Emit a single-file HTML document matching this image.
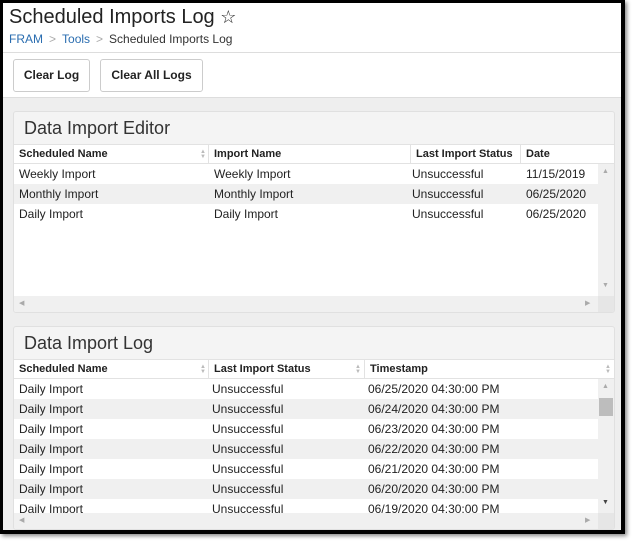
<!DOCTYPE html>
<html><head><style>
*{margin:0;padding:0;box-sizing:border-box}
body{width:633px;height:541px;background:#fff;position:relative;overflow:hidden;font-family:"Liberation Sans",Arial,sans-serif;color:#222}
.frame{position:absolute;left:0;top:0;width:625px;height:534px;border:3px solid #000;border-right-width:4px;border-bottom-width:4px;background:#eeeeee;overflow:hidden;box-shadow:2px 2px 4px #888}
.head{position:absolute;left:0;top:0;right:0;height:50px;background:#fff;border-bottom:1px solid #ddd}
.bar{position:absolute;left:0;top:50px;right:0;height:45px;background:#fff;border-bottom:1px solid #ddd}
.title{position:absolute;left:6px;top:3px;font-size:20px;color:#222}
.crumb{position:absolute;left:6px;top:29px;font-size:12px;color:#333}
.crumb a{color:#2a6db0;text-decoration:none}
.crumb .s{color:#aaa;margin:0 6px}
.btn{position:absolute;top:6px;height:33px;border:1px solid #ccc;border-radius:3px;background:#fff;font-size:12px;font-weight:bold;color:#222;line-height:31px;text-align:center}
.panel{position:absolute;left:10px;width:602px;background:#f4f4f4;border:1px solid #e0e0e0;border-radius:3px;overflow:hidden}
.ptitle{position:absolute;left:10px;top:6px;font-size:18px;color:#333}
.hdr{position:absolute;left:0;right:0;top:32px;height:20px;background:#fff;border-top:1px solid #e2e2e2;border-bottom:1px solid #e2e2e2}
.hdr div{position:absolute;top:0;height:19px;font-size:11px;font-weight:bold;line-height:19px;padding-left:5px;border-right:1px solid #e2e2e2}
.body{position:absolute;left:0;right:16px;top:52px;background:#fff;overflow:hidden}
.row{position:relative;height:20px;font-size:12px;line-height:20px}
.row:nth-child(even){background:#f0f0f0}
.row span{position:absolute;top:0}
.vs{position:absolute;right:0;width:16px;top:52px;background:#f0f0f0}
.hs{position:absolute;left:0;right:16px;height:16px;background:#f0f0f0}
.arr{position:absolute;font-size:7px;color:#aaa}
.sa{position:absolute;font-size:6px;color:#bbb;line-height:5px}
</style></head><body>
<div class="frame">
 <div class="head">
  <div class="title">Scheduled Imports Log <span style="font-size:18px">☆</span></div>
  <div class="crumb"><a>FRAM</a><span class="s">&gt;</span><a>Tools</a><span class="s">&gt;</span>Scheduled Imports Log</div>
 </div>
 <div class="bar">
  <div class="btn" style="left:10px;width:77px">Clear Log</div>
  <div class="btn" style="left:97px;width:103px">Clear All Logs</div>
 </div>

 <div class="panel" style="top:108px;height:202px">
  <div class="ptitle">Data Import Editor</div>
  <div class="hdr">
   <div style="left:0;width:195px">Scheduled Name<span class="sa" style="left:186px;top:5px">▲<br>▼</span></div>
   <div style="left:195px;width:202px">Import Name</div>
   <div style="left:397px;width:110px">Last Import Status</div>
   <div style="left:507px;width:95px;border:0">Date</div>
  </div>
  <div class="body" style="height:132px">
   <div class="row"><span style="left:5px">Weekly Import</span><span style="left:200px">Weekly Import</span><span style="left:398px">Unsuccessful</span><span style="left:512px">11/15/2019</span></div>
   <div class="row"><span style="left:5px">Monthly Import</span><span style="left:200px">Monthly Import</span><span style="left:398px">Unsuccessful</span><span style="left:512px">06/25/2020</span></div>
   <div class="row"><span style="left:5px">Daily Import</span><span style="left:200px">Daily Import</span><span style="left:398px">Unsuccessful</span><span style="left:512px">06/25/2020</span></div>
  </div>
  <div class="vs" style="height:132px"><span class="arr" style="left:4px;top:4px">▲</span><span class="arr" style="left:4px;top:118px">▼</span></div>
  <div class="hs" style="top:184px"><span class="arr" style="left:5px;top:3px">◀</span><span class="arr" style="left:571px;top:3px">▶</span></div>
  <div style="position:absolute;right:0;top:184px;width:16px;height:16px;background:#e6e6e6"></div>
 </div>

 <div class="panel" style="top:323px;height:204px">
  <div class="ptitle">Data Import Log</div>
  <div class="hdr">
   <div style="left:0;width:195px">Scheduled Name<span class="sa" style="left:186px;top:5px">▲<br>▼</span></div>
   <div style="left:195px;width:156px">Last Import Status<span class="sa" style="left:146px;top:5px">▲<br>▼</span></div>
   <div style="left:351px;width:251px;border:0">Timestamp<span class="sa" style="left:240px;top:5px">▲<br>▼</span></div>
  </div>
  <div class="body" style="height:134px">
   <div class="row"><span style="left:5px">Daily Import</span><span style="left:198px">Unsuccessful</span><span style="left:354px">06/25/2020 04:30:00 PM</span></div>
   <div class="row"><span style="left:5px">Daily Import</span><span style="left:198px">Unsuccessful</span><span style="left:354px">06/24/2020 04:30:00 PM</span></div>
   <div class="row"><span style="left:5px">Daily Import</span><span style="left:198px">Unsuccessful</span><span style="left:354px">06/23/2020 04:30:00 PM</span></div>
   <div class="row"><span style="left:5px">Daily Import</span><span style="left:198px">Unsuccessful</span><span style="left:354px">06/22/2020 04:30:00 PM</span></div>
   <div class="row"><span style="left:5px">Daily Import</span><span style="left:198px">Unsuccessful</span><span style="left:354px">06/21/2020 04:30:00 PM</span></div>
   <div class="row"><span style="left:5px">Daily Import</span><span style="left:198px">Unsuccessful</span><span style="left:354px">06/20/2020 04:30:00 PM</span></div>
   <div class="row"><span style="left:5px">Daily Import</span><span style="left:198px">Unsuccessful</span><span style="left:354px">06/19/2020 04:30:00 PM</span></div>
  </div>
  <div class="vs" style="height:134px"><span class="arr" style="left:4px;top:4px">▲</span><div style="position:absolute;left:1px;top:19px;width:14px;height:18px;background:#bdbdbd"></div><span class="arr" style="left:4px;top:120px;color:#444">▼</span></div>
  <div class="hs" style="top:186px"><span class="arr" style="left:5px;top:3px">◀</span><span class="arr" style="left:571px;top:3px">▶</span></div>
  <div style="position:absolute;right:0;top:186px;width:16px;height:16px;background:#e6e6e6"></div>
 </div>
</div>
</body></html>
